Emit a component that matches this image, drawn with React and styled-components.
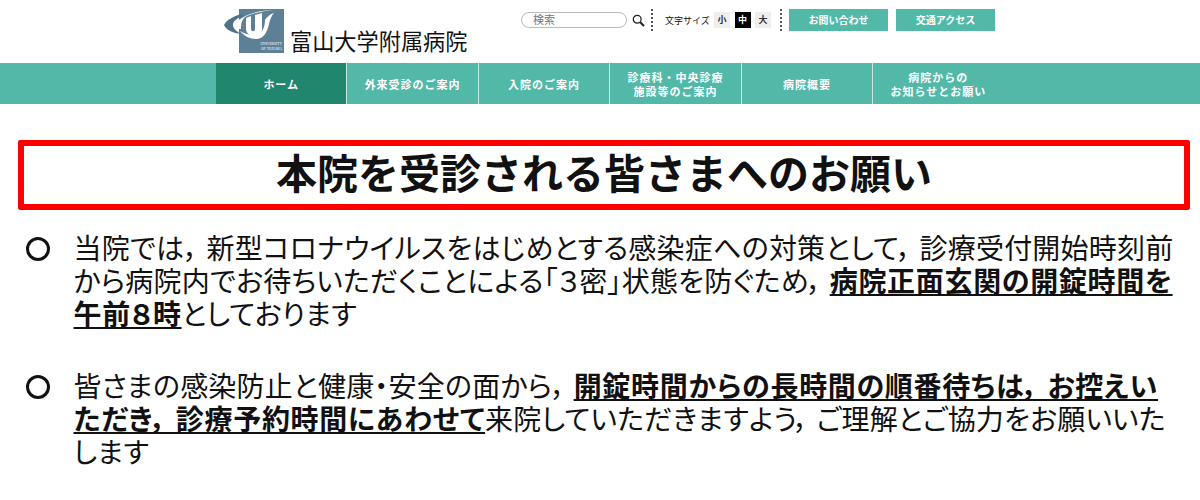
import React from 'react';
import styled, { createGlobalStyle } from 'styled-components';

const navItems = [
  { label: 'ホーム', active: true },
  { label: '外来受診のご案内' },
  { label: '入院のご案内' },
  { label: '診療科・中央診療\n施設等のご案内' },
  { label: '病院概要' },
  { label: '病院からの\nお知らせとお願い' },
];

export default function App() {
  return (
    <Page>
      <Global />
      <Header>
        <Brand>
          <Logo />
          <SiteName>富山大学附属病院</SiteName>
        </Brand>
        <Tools>
          <Search>
            <SearchBox>検索</SearchBox>
            <SearchIcon />
          </Search>
          <Dots />
          <SizeTools>
            <SizeLabel>文字サイズ</SizeLabel>
            <SizeBtn>小</SizeBtn>
            <SizeBtn selected>中</SizeBtn>
            <SizeBtn>大</SizeBtn>
          </SizeTools>
          <Dots />
          <LinkBtn>お問い合わせ</LinkBtn>
          <LinkBtn>交通アクセス</LinkBtn>
        </Tools>
      </Header>
      <Nav>
        <NavInner>
          {navItems.map((item) => (
            <NavItem key={item.label} active={item.active}>{item.label}</NavItem>
          ))}
        </NavInner>
      </Nav>
      <Main>
        <Notice>本院を受診される皆さまへのお願い</Notice>
        <List>
          <Item>
            <Bullet />
            <Text>
              当院では， 新型コロナウイルスをはじめとする感染症への対策として， 診療受付開始時刻前<br />
              から病院内でお待ちいただくことによる「３密」状態を防ぐため， <Strong>病院正面玄関の開錠時間を</Strong><br />
              <Strong>午前８時</Strong>としております
            </Text>
          </Item>
          <Item>
            <Bullet />
            <Text>
              皆さまの感染防止と健康・安全の面から， <Strong>開錠時間からの長時間の順番待ちは， お控えい</Strong><br />
              <Strong>ただき， 診療予約時間にあわせて</Strong>来院していただきますよう， ご理解とご協力をお願いいた<br />
              します
            </Text>
          </Item>
        </List>
      </Main>
    </Page>
  );
}

function Logo() {
  return (
    <LogoBox>
      <svg width="60" height="46" viewBox="0 0 60 46">
        <rect x="15" y="0" width="45" height="44" fill="#5d8096" />
        <path d="M18 5 C10 7 2 11 0 16 C2 21 9 24 17 25 C12 22 9 19 9 16 C9 12 13 9 18 8 Z" fill="#4f7489" />
        <path d="M15 11 C22 5 36 1 50 1 C40 2 28 4 21 8 C18 11 17 14 17 20 L15 20 Z" fill="#fff" />
        <path d="M16 22 C20 27 26 30 32 30 C39 30 43 24 45 15 C46 10 48 6 50 4 C46 5 43 8 41 11 C41 18 38 25 32 26 C26 26 21 25 16 22 Z" fill="#fff" />
        <path d="M22 9 L27 7 L27 20 C27 23 31 23 31 20 L31 6 L38 4 L38 20 C38 29 22 29 22 20 Z" fill="#fff" />
        <text x="58" y="36" textAnchor="end" fontSize="3.6" fontFamily="'Liberation Serif', serif" fill="#fff">UNIVERSITY</text>
        <text x="58" y="41" textAnchor="end" fontSize="3.6" fontFamily="'Liberation Serif', serif" fill="#fff">OF TOYAMA</text>
      </svg>
    </LogoBox>
  );
}

function SearchIcon() {
  return (
    <svg width="13" height="13" viewBox="0 0 13 13">
      <circle cx="5.2" cy="5.2" r="3.9" fill="none" stroke="#222" strokeWidth="1.3" />
      <path d="M8.2 8.2 L12 12" stroke="#222" strokeWidth="2" />
    </svg>
  );
}

const Global = createGlobalStyle`
  html, body {
    margin: 0;
    background: #fff;
  }
  body {
    font-family: "Liberation Sans", "Noto Sans CJK JP", sans-serif;
    color: #111;
  }
`;

const Page = styled.div`
  width: 1200px;
  height: 500px;
  overflow: hidden;
`;

const Header = styled.header`
  display: flex;
  height: 63px;
  padding-left: 224px;
  box-sizing: border-box;
`;

const Brand = styled.div`
  display: flex;
  width: 297px;
  padding-top: 9px;
  box-sizing: border-box;
`;

const LogoBox = styled.div`
  width: 60px;
  height: 46px;
`;

const SiteName = styled.div`
  margin: 21px 0 0 6px;
  font-size: 22.2px;
  line-height: 26px;
  white-space: nowrap;
`;

const Tools = styled.div`
  display: flex;
  align-items: flex-start;
  padding-top: 9px;
`;

const Search = styled.div`
  display: flex;
  align-items: center;
  gap: 5px;
  height: 22px;
  margin-right: 6px;
`;

const SearchBox = styled.div`
  width: 106px;
  height: 16px;
  box-sizing: border-box;
  padding-left: 11px;
  border: 1px solid #bbb;
  border-radius: 8px;
  font-size: 11px;
  line-height: 14px;
  color: #777;
`;

const Dots = styled.div`
  width: 0;
  height: 22px;
  margin-right: -1px;
  border-left: 2px dotted #555;
`;

const SizeTools = styled.div`
  display: flex;
  align-items: center;
  height: 22px;
  margin: 0 9px 0 13px;
  gap: 4.5px;
`;

const SizeLabel = styled.span`
  width: 44.5px;
  font-size: 9px;
  white-space: nowrap;
`;

const SizeBtn = styled.span`
  width: 16px;
  height: 16px;
  font-size: 9px;
  line-height: 16px;
  text-align: center;
  font-weight: bold;
  background: ${(p) => (p.selected ? '#000' : '#eee')};
  color: ${(p) => (p.selected ? '#fff' : '#333')};
`;

const LinkBtn = styled.div`
  width: 99px;
  height: 22px;
  margin-left: 8px;
  background: #52b9a8;
  color: #fff;
  font-size: 10px;
  font-weight: bold;
  line-height: 23px;
  text-align: center;
`;

const Nav = styled.nav`
  height: 41px;
  background: #52b9a8;
`;

const NavInner = styled.div`
  display: flex;
  margin-left: 216px;
  width: 787.5px;
  height: 100%;
`;

const NavItem = styled.div`
  display: flex;
  flex: 1;
  align-items: center;
  justify-content: center;
  padding-top: 2px;
  box-sizing: border-box;
  white-space: pre-line;
  text-align: center;
  font-size: 11px;
  line-height: 14px;
  font-weight: bold;
  letter-spacing: 1px;
  color: #fff;
  background: ${(p) => (p.active ? '#20866e' : 'transparent')};
  border-right: 1px solid #c5e8e1;
  &:last-child {
    border-right: 0;
  }
`;

const Main = styled.main`
  padding: 36px 10px 0 18px;
`;

const Notice = styled.h1`
  height: 70px;
  margin: 0;
  box-sizing: border-box;
  border: 6px solid #f00;
  border-radius: 2px;
  font-size: 41px;
  font-weight: bold;
  line-height: 58px;
  text-align: center;
  color: #111;
`;

const List = styled.div`
  display: flex;
  flex-direction: column;
  gap: 39px;
  margin-top: 23px;
  padding-left: 8px;
`;

const Item = styled.div`
  display: flex;
  gap: 23.5px;
`;

const Bullet = styled.div`
  flex: none;
  width: 24px;
  height: 24px;
  margin-top: 4px;
  box-sizing: border-box;
  border: 3px solid #111;
  border-radius: 50%;
`;

const Text = styled.p`
  margin: 0;
  font-size: 28px;
  line-height: 33px;
  letter-spacing: 0.22px;
  white-space: nowrap;
  font-feature-settings: "palt";
`;

const Strong = styled.strong`
  letter-spacing: 0.7px;
  text-decoration: underline;
`;
